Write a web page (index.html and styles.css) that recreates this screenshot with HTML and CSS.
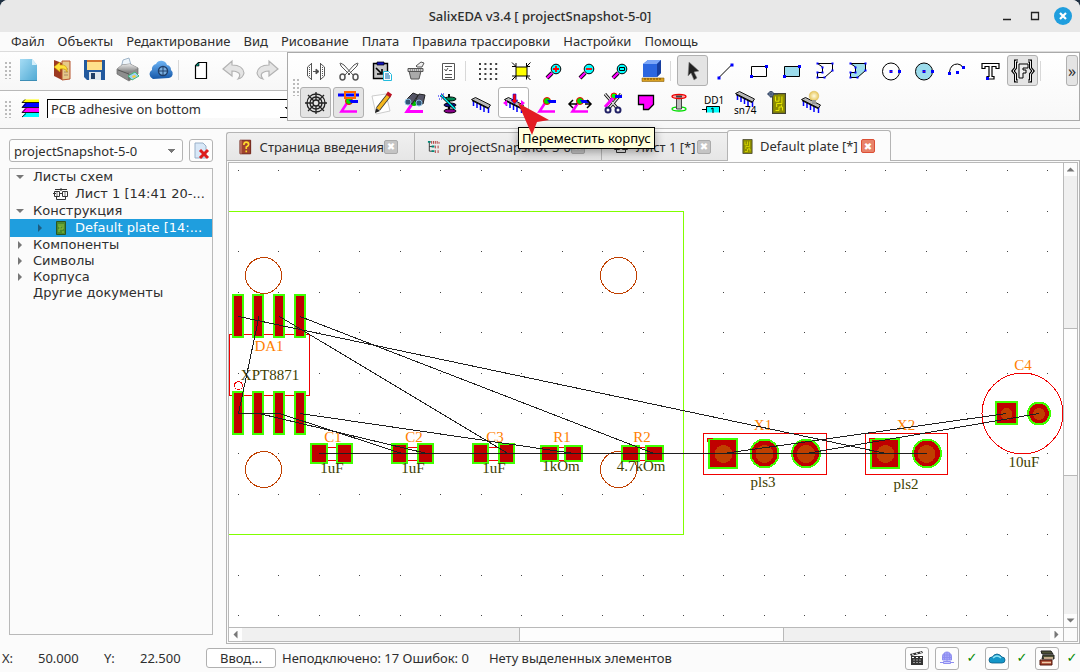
FILE: index.html
```html
<!DOCTYPE html>
<html lang="ru">
<head>
<meta charset="utf-8">
<title>SalixEDA v3.4 [ projectSnapshot-5-0]</title>
<link rel="stylesheet" href="styles.css">
</head>
<body>
<svg class="defs" width="0" height="0" aria-hidden="true">
  <defs>
    <linearGradient id="gBlue" x1="0" y1="0" x2="1" y2="1"><stop offset="0" stop-color="#a5dcf5"/><stop offset="1" stop-color="#4fa9d3"/></linearGradient>
    <linearGradient id="gCloud" x1="0" y1="0" x2="0" y2="1"><stop offset="0" stop-color="#6db4f5"/><stop offset="1" stop-color="#1557a8"/></linearGradient>
    <linearGradient id="gGrey" x1="0" y1="0" x2="0" y2="1"><stop offset="0" stop-color="#e8e8e8"/><stop offset="1" stop-color="#777"/></linearGradient>
    <radialGradient id="gBulb"><stop offset="0" stop-color="#fffbe0"/><stop offset="1" stop-color="#e8c860"/></radialGradient>
  </defs>
  <symbol id="lens" viewBox="0 0 24 24"><path d="M10 14l-5 5" stroke="#000" stroke-width="4"/><path d="M10 14l-5 5" stroke="#f0f" stroke-width="2.4"/><circle cx="14" cy="10" r="4.8" fill="#0ff" stroke="#000" stroke-width="1"/></symbol>
  <symbol id="chip" viewBox="0 0 24 24"><path d="M4.500 10v5M8 12v5M11.500 13v6M15 15v6M19.500 16v6" stroke="#00f" stroke-width="1.500"/><path d="M2.500 8.500l4-2 15 7.500-2 3z" fill="#b8b8b8" stroke="#000" stroke-width=".9"/><path d="M3 9.500l16 8" stroke="#000" stroke-width="1.200"/></symbol>
  <symbol id="track" viewBox="0 0 24 24"><path d="M10 12l-5.500 8.500H20" fill="none" stroke="#f0f" stroke-width="2.600"/><circle cx="12" cy="10" r="3.500" fill="#0d0" stroke="#f00"/><path d="M12 9h9v3h-7z" fill="#00f"/></symbol>
  <symbol id="board" viewBox="0 0 12 18"><path d="M.5.5h11v17H.5z" fill="#8d8d00" stroke="#443"/><path d="M3 3v4h3V3M8.500 3v6H4v3M3 15h3v-3h3v3M8 10v2" fill="none" stroke="#ee0" stroke-width=".8"/></symbol>
  <symbol id="sheet" viewBox="0 0 16 14"><path d="M1.500 4.500h5v5h-5zM9.500 4.500h5v5h-5zM0 6.500h3M6 6.500h4M3.500 9v3.500h9V9M8 1v3M2 2.500h12" fill="none" stroke="#333"/><path d="M4 5v4M12 5v4" stroke="#777"/></symbol>
</svg>

<div class="window">
  <header class="titlebar">
    <span class="title-space"></span>
    <h1 class="title">SalixEDA v3.4 [ projectSnapshot-5-0]</h1>
    <div class="win-controls">
      <button class="wc" aria-label="Свернуть"><svg width="10" height="12"><path d="M1 9.500h8" stroke="#222" stroke-width="1.500"/></svg></button>
      <button class="wc" aria-label="Развернуть"><svg width="10" height="10"><path d="M1.500 1.500h7v7h-7z" fill="none" stroke="#222" stroke-width="1.300"/></svg></button>
      <button class="wc wc-close" aria-label="Закрыть"><svg width="18" height="18"><circle cx="9" cy="9" r="9" fill="#1f9ede"/><path d="M6 6l6 6M12 6l-6 6" stroke="#fff" stroke-width="2.200"/></svg></button>
    </div>
  </header>

  <nav class="menubar">
    <button>Файл</button><button>Объекты</button><button>Редактирование</button><button>Вид</button><button>Рисование</button><button>Плата</button><button>Правила трассировки</button><button>Настройки</button><button>Помощь</button>
  </nav>

  <div class="docks">
    <div class="toolbar bar-file">
      <span class="grip"></span>
      <button class="tool" aria-label="Новый"><svg viewBox="0 0 24 24"><path d="M3 1h12l5 6v16H3z" fill="url(#gBlue)"/><path d="M15 1l5 6h-5z" fill="#d5effa"/><path d="M3 22.500h17" stroke="#3c8db5"/></svg></button>
      <button class="tool" aria-label="Открыть"><svg viewBox="0 0 24 24"><path d="M4 2l8 3v17l-8-4z" fill="#9c3a22"/><path d="M12 3h8v18l-8 1z" fill="#e6c98a" stroke="#b5542f"/><path d="M14 11h4M14 14h4M14 17h4" stroke="#a86"/><path d="M10 4L4 9l6 5v-3q6-1 7 3 1-8-7-7z" fill="#ffe13a" stroke="#c79a00" stroke-width=".6"/></svg></button>
      <button class="tool" aria-label="Сохранить"><svg viewBox="0 0 24 24"><path d="M1 2h21v20H4l-3-3z" fill="#235a9e"/><path d="M4 2h15v10H4z" fill="#ffe08a"/><path d="M4 2h15v2H4z" fill="#d4752f"/><path d="M6 14h12v8H6z" fill="#dfe8ee"/><path d="M8 15h4v6H8z" fill="#1e3e66"/></svg></button>
      <button class="tool" aria-label="Печать"><svg viewBox="0 0 24 24"><path d="M5 10l2-8 6-2 2 7z" fill="#eef5fb" stroke="#8aa3bb" stroke-width=".8"/><path d="M1 11l5-4 8-1 8 4v6l-9 7-12-7z" fill="#8d8d8d" stroke="#666" stroke-width=".7"/><path d="M1 11l5-4 8-1 8 4-9 5z" fill="url(#gGrey)"/><path d="M2 12l11 4v6" fill="none" stroke="#555"/><path d="M12 18l7-4 4 4-7 4z" fill="#9fd0f2" stroke="#4b7"/><path d="M16 18l3-1 1 2-3 1z" fill="#fc3"/></svg></button>
      <button class="tool" aria-label="Облако"><svg viewBox="0 0 24 24"><path d="M4 21a5 5 0 0 1-1-9 5 5 0 0 1 4-6 6 6 0 0 1 11 1 5 5 0 0 1 4 5 4.500 4.500 0 0 1-2 8z" fill="url(#gCloud)"/><circle cx="14" cy="13" r="4.500" fill="#7aaede" stroke="#20406c" stroke-width="1.500"/><path d="M14 9v8M10 13h8" stroke="#20406c" stroke-width="1"/></svg></button>
      <span class="sep"></span>
      <button class="tool" aria-label="Страница"><svg viewBox="0 0 24 24"><path d="M9.500 4.500h8v16h-11v-13z" fill="#fff" stroke="#000" stroke-width="1.200"/><path d="M6 8l4-4v4z" fill="#087" stroke="#000" stroke-width=".6"/></svg></button>
      <button class="tool" aria-label="Отменить"><svg viewBox="0 0 24 24"><path d="M1 11l9-8v4q11 0 12 8-1 5-6 6 4-5-1-7-2-1-5-1v5z" fill="#e4e4e4" stroke="#b2b2b2" stroke-width="1.200"/></svg></button>
      <button class="tool" aria-label="Вернуть"><svg viewBox="0 0 24 24"><path d="M23 11l-9-8v4Q3 7 2 15q1 5 6 6-4-5 1-7 2-1 5-1v5z" fill="#e4e4e4" stroke="#b2b2b2" stroke-width="1.200"/></svg></button>
    </div>
    <div class="toolbar bar-layer">
      <span class="grip"></span>
      <button class="tool tool-layer" aria-label="Слои"><svg viewBox="0 0 24 24"><path d="M7 2.500h14v3H4z" fill="#ff0"/><path d="M7 6h14v4H4z" fill="#00f"/><path d="M7 11h14v4H4z" fill="#f0f"/><path d="M7 16h14v4H4z" fill="#0ff"/><path d="M7 2.500L4 5.500h17M8 6.500l-4 4h17M8 11.500l-4 4h17M8 16.500L4 20" fill="none" stroke="#000" stroke-width=".9"/></svg></button>
      <select class="layer-select" aria-label="Слой"><option>PCB adhesive on bottom</option></select>
    </div>

    <div class="float-bar">
      <span class="grip grip-tall"></span>
      <div class="tool-rows">
        <div class="tool-row">
          <button class="tool" aria-label="Отразить"><svg viewBox="0 0 24 24" fill="none" stroke="#555"><path d="M7.500 4v17M16.500 4v17"/><path d="M7 5L3.500 8v9L7 20M17 5l3.500 3v9L17 20"/><path d="M5.500 8v9M18.500 8v9" stroke-dasharray="1 1"/><path d="M9 12.500h4M12 10l3 2.500-3 2.500z" fill="#444"/></svg></button>
          <button class="tool" aria-label="Вырезать"><svg viewBox="0 0 24 24" fill="none" stroke="#555"><path d="M3.500 4L7 6l9 10M20.500 4L17 6 8 16M3 4l1 3 9 9M21 4l-1 3-9 9"/><ellipse cx="5.500" cy="18" rx="2.500" ry="3" stroke-width="1.500"/><ellipse cx="18.500" cy="18" rx="2.500" ry="3" stroke-width="1.500"/></svg></button>
          <button class="tool" aria-label="Вставить"><svg viewBox="0 0 24 24"><path d="M3.500 4.500h14v15h-14z" fill="#c6c6c6" stroke="#000" stroke-width="1.400"/><path d="M7 3h7v3H7z" fill="#11b" stroke="#000" stroke-width=".7"/><path d="M6 9l6 6M12 10v5H7" stroke="#000" stroke-width="1.600" fill="none"/><path d="M13.500 12.500h5l3 3v6h-8z" fill="#fff" stroke="#2bd"/><path d="M15 15h4M15 17h5M15 19h5" stroke="#06a"/></svg></button>
          <button class="tool" aria-label="Удалить"><svg viewBox="0 0 24 24" fill="#aaa" stroke="#555"><path d="M6 12h12l-2 8H8z"/><path d="M5 9.500h15v3H5z" fill="#ccc"/><path d="M7 11h11" stroke-dasharray="1 1"/><path d="M13 7l5-4 3 1-2 4h-5z" fill="#eee"/></svg></button>
          <button class="tool" aria-label="Свойства"><svg viewBox="0 0 24 24" fill="none" stroke="#555"><path d="M6.500 4.500h12v16h-12z" fill="#fff"/><path d="M9 7.500h7M9 15.500h7M9 18.500h7M8.500 10l1.500 2 2-3M13 11.500h3"/></svg></button>
          <span class="sep"></span>
          <button class="tool" aria-label="Сетка"><svg viewBox="0 0 24 24"><path d="M3 5h19M3 10h19M3 15h19M3 20h19" stroke="#000" stroke-width="1.600" stroke-dasharray="2 3.400"/></svg></button>
          <button class="tool" aria-label="Вписать"><svg viewBox="0 0 24 24"><path d="M7 8h11v9H7z" fill="#ff0" stroke="#000"/><path d="M3 3.500l4 4M7 4v3.500H3M21.500 3.500l-4 4M17.500 4v3.500H21M3 21l4-4M7 20.500V17H3M21.500 21l-4-4M17.500 20.500V17H21" stroke="#000" fill="none"/></svg></button>
          <button class="tool" aria-label="Увеличить"><svg viewBox="0 0 24 24"><use href="#lens"/><path d="M11 10h6M14 7v6" stroke="#f00" stroke-width="1.800"/></svg></button>
          <button class="tool" aria-label="Уменьшить"><svg viewBox="0 0 24 24"><use href="#lens"/><path d="M11 10h6" stroke="#f00" stroke-width="1.800"/></svg></button>
          <button class="tool" aria-label="Увеличить область"><svg viewBox="0 0 24 24"><use href="#lens"/><path d="M11.500 8.500h5v3h-5z" stroke="#000" fill="none"/></svg></button>
          <button class="tool" aria-label="Трёхмерный вид"><svg viewBox="0 0 24 24"><path d="M2 5l5-4h13v13l-4 4H2z" fill="#2b66e0"/><path d="M2 5l5-4h13l-4 4z" fill="#7ba6f8"/><path d="M16 5l4-4v13l-4 4z" fill="#173e9e"/><path d="M1 19h22v3.500H1z" fill="#d9a021" stroke="#8a6008" stroke-width=".6"/><path d="M4 19v2M7 19v2M10 19v2M13 19v2M16 19v2M19 19v2" stroke="#744b00"/></svg></button>
          <span class="sep"></span>
          <button class="tool on" aria-label="Выбор"><svg viewBox="0 0 24 24"><path d="M8 3l10 9-5 1 3 6-3 2-3-7-3 3z" fill="#222" stroke="#888" stroke-width=".6"/></svg></button>
          <button class="tool" aria-label="Линия"><svg viewBox="0 0 24 24"><path d="M5 18.500l13-13" stroke="#000"/><path d="M3.500 17.500h3v3h-3zM16.500 4.500h3v3h-3z" fill="#00f"/></svg></button>
          <button class="tool" aria-label="Прямоугольник"><svg viewBox="0 0 24 24"><path d="M4.500 7.500h15v10h-15z" fill="none" stroke="#000"/><path d="M3 16h3v3H3zM18 6h3v3h-3z" fill="#00f"/></svg></button>
          <button class="tool" aria-label="Заполненный прямоугольник"><svg viewBox="0 0 24 24"><path d="M4.500 7.500h15v10h-15z" fill="#9cdcec" stroke="#000"/><path d="M3 16h3v3H3zM18 6h3v3h-3z" fill="#00f"/></svg></button>
          <button class="tool" aria-label="Полилиния"><svg viewBox="0 0 24 24"><path d="M4.500 4.500h15v7l-8 7h-7v-5h5V8z" fill="none" stroke="#000"/><path d="M3.500 4.500h2M18.500 4.500h2M18.500 11.500h2M10.500 18.500h2M3.500 18.500h2M3.500 13.500h2M8.500 13.500h2M8.500 8.500h2" stroke="#00f" stroke-width="2"/></svg></button>
          <button class="tool" aria-label="Полигон"><svg viewBox="0 0 24 24"><path d="M4.500 4.500h15v7l-8 7h-7v-5h5V8z" fill="#9cdcec" stroke="#000"/><path d="M3.500 4.500h2M18.500 4.500h2M18.500 11.500h2M10.500 18.500h2M3.500 18.500h2M3.500 13.500h2M8.500 13.500h2M8.500 8.500h2" stroke="#00f" stroke-width="2"/></svg></button>
          <button class="tool" aria-label="Окружность"><svg viewBox="0 0 24 24"><circle cx="12" cy="12.500" r="8.500" fill="none" stroke="#000"/><path d="M10.500 11h3v3h-3zM19 11h3v3h-3z" fill="#00f"/><path d="M11.500 12h1v1h-1z" fill="#f00"/></svg></button>
          <button class="tool" aria-label="Круг"><svg viewBox="0 0 24 24"><circle cx="12" cy="12.500" r="8.500" fill="#9cdcec" stroke="#000"/><path d="M10.500 11h3v3h-3zM19 11h3v3h-3z" fill="#00f"/><path d="M11.500 12h1v1h-1z" fill="#f00"/></svg></button>
          <button class="tool" aria-label="Дуга"><svg viewBox="0 0 24 24"><path d="M4.500 13q1-8 8-8 4 0 5.500 4" fill="none" stroke="#000"/><path d="M3 13h3v3H3zM17 7h3v3h-3zM11 12h3v3h-3z" fill="#00f"/></svg></button>
          <button class="tool" aria-label="Текст"><svg viewBox="0 0 24 24"><path d="M4 4.500h17v5h-3v-2h-4v10h2v2.500H9v-2.500h2v-10H7v2H4z" fill="#fff" stroke="#000" stroke-width="1.200"/><path d="M8 18h3v3H8z" fill="#00f"/></svg></button>
          <button class="tool on" aria-label="Параметр"><svg viewBox="0 0 24 24"><path d="M7 2H4.500v7L2 12l2.500 3v7H7M17 2h2.500v7l2.500 3-2.500 3v7H17" fill="none" stroke="#000" stroke-width="3"/><path d="M7 2H4.500v7L2 12l2.500 3v7H7M17 2h2.500v7l2.500 3-2.500 3v7H17" fill="none" stroke="#eee"/><path d="M8 5h9v4h-5v2h3v3h-3v5H8z" fill="#eee" stroke="#000"/></svg></button>
          <span class="sep"></span>
          <button class="more" aria-label="Ещё">»</button>
        </div>
        <div class="tool-row">
          <button class="tool on" aria-label="Сетка связей"><svg viewBox="0 0 24 24" fill="none" stroke="#222" stroke-width="1.300"><circle cx="12" cy="12" r="3"/><circle cx="12" cy="12" r="6"/><circle cx="12" cy="12" r="9"/><path d="M1 12h8M15 12h8M12 1v8M12 15v8M4 4l6 6M20 4l-6 6M4 20l6-6M20 20l-6-6"/></svg></button>
          <button class="tool on" aria-label="Трассировать"><svg viewBox="0 0 24 24"><path d="M1 2.500h21v3H1z" fill="#00f"/><use href="#track"/><path d="M8 1h10v6H8z" fill="none" stroke="#f60" stroke-width="2"/></svg></button>
          <button class="tool" aria-label="Правка"><svg viewBox="0 0 24 24"><path d="M2 5l14-2 4 17-14 3z" fill="#fff" stroke="#ccc"/><path d="M8 18L19 4" stroke="#333" stroke-width="5"/><path d="M8 18L19 4" stroke="#f4b71e" stroke-width="3.400"/><path d="M18 5l2-3" stroke="#b12" stroke-width="5"/><path d="M5 22l1-5 4 3z" fill="#222"/></svg></button>
          <button class="tool" aria-label="Найти"><svg viewBox="0 0 24 24"><path d="M9 13l-5 7.500h16" fill="none" stroke="#f0f" stroke-width="3"/><circle cx="11" cy="12" r="3" fill="#0b0"/><path d="M2 10l8-8 5 2-6 9zM12 10l4-7 6 1-2 9z" fill="#556" stroke="#222"/><ellipse cx="5" cy="11" rx="3" ry="3" fill="#357" stroke="#8bd"/><ellipse cx="16" cy="12" rx="3" ry="3" fill="#357" stroke="#8bd"/></svg></button>
          <button class="tool" aria-label="Слои платы"><svg viewBox="0 0 24 24"><path d="M13 3v18" stroke="#000" stroke-width="2"/><ellipse cx="14" cy="8" rx="6" ry="2" fill="#085" stroke="#000"/><ellipse cx="14" cy="14" rx="6" ry="2" fill="#118" stroke="#000"/><ellipse cx="14" cy="20" rx="6" ry="2" fill="#808" stroke="#000"/><path d="M5 4l14 14" stroke="#000" stroke-width="2.600"/><path d="M5 4l14 14" stroke="#0ff" stroke-width="1.400"/><path d="M2 5h4M5 3h4M3 8h3M7 6h2" stroke="#00f" stroke-dasharray="1 1"/></svg></button>
          <button class="tool" aria-label="Корпус"><svg viewBox="0 0 24 24"><use href="#chip"/></svg></button>
          <button class="tool hover" aria-label="Переместить корпус"><svg viewBox="0 0 24 24"><use href="#chip"/><path d="M11 3h3v6h2l-3.500 4L9 9h2z" fill="#f00" stroke="#00f" stroke-width=".6"/><path d="M1 12l4-3v6zM23 12l-4-3v6z" fill="#f0f"/></svg></button>
          <button class="tool" aria-label="Дорожка"><svg viewBox="0 0 24 24"><use href="#track"/></svg></button>
          <button class="tool" aria-label="Сдвинуть дорожку"><svg viewBox="0 0 24 24"><use href="#track"/><path d="M1 13h8M17 13h6M5 9l-4 4 4 4M19 9l4 4-4 4" fill="none" stroke="#000" stroke-width="1.500"/></svg></button>
          <button class="tool" aria-label="Удалить дорожку"><svg viewBox="0 0 24 24"><path d="M4 3l12 14M20 3L8 17" stroke="#000" stroke-width="3"/><path d="M4 3l12 14M20 3L8 17" stroke="#ddd" stroke-width="1.400"/><circle cx="13" cy="5" r="3" fill="#0f0" stroke="#f00"/><path d="M14 4h7v3h-7z" fill="#00f"/><path d="M4 16l8-9" stroke="#f0f" stroke-width="3"/><circle cx="7" cy="19" r="2.500" fill="none" stroke="#226" stroke-width="2"/><circle cx="17" cy="19" r="2.500" fill="none" stroke="#226" stroke-width="2"/></svg></button>
          <button class="tool" aria-label="Полигон меди"><svg viewBox="0 0 24 24"><path d="M4.500 4.500h15v9l-5 5h-5v-5h-5z" fill="#f0f" stroke="#000" stroke-width="1.300"/></svg></button>
          <button class="tool" aria-label="Переходное отверстие"><svg viewBox="0 0 24 24"><ellipse cx="12" cy="18" rx="7" ry="2" fill="none" stroke="#0d0" stroke-width="1.300"/><path d="M9.500 7h5v11h-5z" fill="#bbb" stroke="#444"/><ellipse cx="12" cy="5.500" rx="7" ry="2" fill="#faa" stroke="#e00" stroke-width="1.300"/><path d="M9 5.500h6" stroke="#444" stroke-width="2"/></svg></button>
          <button class="tool" aria-label="Перенумеровать"><svg viewBox="0 0 24 24"><text class="ico-text" x="4" y="13">DD1</text><path d="M6.500 15.500h13v6h-13z" fill="#0ff"/><path d="M19.500 21.500v-6h-13v6M2 18.500h4M11 18l2-1v5" fill="none" stroke="#000"/></svg></button>
          <button class="tool" aria-label="Тип корпуса"><svg viewBox="0 0 24 24"><use href="#chip" y="-6"/><text class="ico-text ico-small" x="1" y="23">sn74</text></svg></button>
          <button class="tool" aria-label="Параметры платы"><svg viewBox="0 0 24 24"><use href="#board" x="4" y="2" width="18" height="21"/><circle cx="5" cy="3" r="2.500" fill="#9ab" stroke="#346"/><path d="M1 3h11M5 0v7" stroke="#346"/></svg></button>
          <button class="tool" aria-label="Подсказка корпуса"><svg viewBox="0 0 24 24"><use href="#chip"/><circle cx="15" cy="5" r="4.800" fill="url(#gBulb)" stroke="#d8b850" stroke-width=".5"/><path d="M13 9h4v4h-4z" fill="#999"/></svg></button>
        </div>
      </div>
    </div>
  </div>

  <main class="work">
    <aside class="sidebar">
      <div class="project-row">
        <select class="project-select" aria-label="Проект"><option>projectSnapshot-5-0</option></select>
        <button class="close-project" aria-label="Закрыть проект"><svg width="18" height="18" viewBox="0 0 18 18"><path d="M3 1h8l3 3v12H3z" fill="#d8e8f8" stroke="#9ab0c8"/><path d="M8 8l8 8M16 8l-8 8" stroke="#dd1c1c" stroke-width="3"/></svg></button>
      </div>
      <ul class="tree">
        <li class="row"><i class="arrow down"></i>Листы схем</li>
        <li class="row child"><svg width="16" height="14"><use href="#sheet"/></svg><span>Лист 1 [14:41 20-...</span></li>
        <li class="row"><i class="arrow down"></i>Конструкция</li>
        <li class="row child selected"><i class="arrow right"></i><svg width="16" height="14" viewBox="0 0 16 14"><path d="M3.500.500h9v13h-9z" fill="#4a8a2e" stroke="#2b5520"/><path d="M6 3v3h2V3M10 3v5H6v3M9 11h2" fill="none" stroke="#8fc23c"/></svg><span>Default plate [14:...</span></li>
        <li class="row"><i class="arrow right"></i>Компоненты</li>
        <li class="row"><i class="arrow right"></i>Символы</li>
        <li class="row"><i class="arrow right"></i>Корпуса</li>
        <li class="row"><i class="arrow"></i>Другие документы</li>
      </ul>
    </aside>

    <section class="editor">
      <div class="tabs">
        <div class="tab tab-a"><svg width="16" height="16" viewBox="0 0 14 16"><path d="M1 1h11v14H1z" fill="#a1432f" stroke="#6e2015"/><path d="M2 1v14" stroke="#d98"/><path d="M5 6q0-3 2.500-3T10 5.500Q10 7 7.500 8v2M7.500 11.500v2" fill="none" stroke="#ffdc2e" stroke-width="1.700"/></svg><span>Страница введения</span><button class="tab-x" aria-label="Закрыть вкладку">✖</button></div>
        <div class="tab tab-b"><svg width="16" height="16" viewBox="0 0 15 15"><path d="M2.500 2v10M2.500 7H6M2.500 12H6" stroke="#333" fill="none"/><path d="M1 2h3M5 7h3M5 12h3" stroke="#087" stroke-width="2"/><path d="M5 1v3M7 1v3M9 1v3M11 1v3M13 2v2M9 6v3M12 6v3M9 11v3M12 11v3" stroke="#a33"/></svg><span>projectSnapshot-5-0</span><button class="tab-x" aria-label="Закрыть вкладку">✖</button></div>
        <div class="tab tab-c"><svg width="16" height="14"><use href="#sheet"/></svg><span>Лист 1 [*]</span><button class="tab-x" aria-label="Закрыть вкладку">✖</button></div>
        <div class="tab active"><svg width="11" height="15"><use href="#board"/></svg><span>Default plate [*]</span><button class="tab-x red" aria-label="Закрыть вкладку">✖</button></div>
      </div>
      <div class="pane">
        <div class="view">
          <svg class="pcb" role="img" aria-label="Печатная плата">
            <g transform="translate(-229 -163)">
              <path class="dots" d="M238 170.500h900M238 211.500h900M238 251.500h900M238 292.500h900M238 332.500h900M238 373.500h900M238 413.500h900M238 453.500h900M238 494.500h900M238 534.500h900M238 575.500h900M238 615.500h900"/>
              <path class="edge" d="M220 211.500H683.500V534.500H220"/>
              <g class="hole"><circle cx="263.500" cy="275.500" r="18"/><circle cx="618.500" cy="275.500" r="18"/><circle cx="263.500" cy="469.500" r="18"/><circle cx="618.500" cy="469.500" r="18"/></g>
              <g class="outline">
                <path d="M229.500 334.500h80v61h-80zM703.500 433.500h123v41h-123zM865.500 433.500h82v41h-82z"/>
                <path d="M324 447.500h16M324 460.500h16M405 447.500h16M405 460.500h16M486 447.500h16M486 460.500h16M556 447.500h11M556 460.500h11M637 447.500h11M637 460.500h11"/>
                <circle cx="238.500" cy="385.500" r="4"/><circle cx="1022.500" cy="413.500" r="40.500"/>
              </g>
              <g class="pad">
                <rect x="233" y="295" width="10" height="42"/><rect x="253" y="295" width="10" height="42"/><rect x="274" y="295" width="10" height="42"/><rect x="295" y="295" width="10" height="42"/>
                <rect x="233" y="392" width="10" height="42"/><rect x="253" y="392" width="10" height="42"/><rect x="274" y="392" width="10" height="42"/><rect x="295" y="392" width="10" height="42"/>
                <rect x="311" y="444" width="16" height="19"/><rect x="337" y="444" width="15" height="19"/>
                <rect x="392" y="444" width="15" height="19"/><rect x="418" y="444" width="15" height="19"/>
                <rect x="473" y="444" width="15" height="19"/><rect x="499" y="444" width="15" height="19"/>
                <rect x="541" y="446" width="17" height="15"/><rect x="565" y="446" width="17" height="15"/>
                <rect x="622" y="446" width="17" height="15"/><rect x="646" y="446" width="17" height="15"/>
                <rect x="709" y="439" width="28" height="29"/><circle cx="764.500" cy="453.500" r="14"/><circle cx="806" cy="453.500" r="14"/>
                <rect x="871" y="439" width="28" height="29"/><circle cx="927" cy="453.500" r="14"/>
                <rect x="996" y="402" width="21" height="22"/><circle cx="1039" cy="413.500" r="11"/>
              </g>
              <g class="drill"><circle cx="723.500" cy="454" r="9"/><circle cx="764.500" cy="454" r="9"/><circle cx="806" cy="454" r="9"/><circle cx="885.500" cy="454" r="9"/><circle cx="926.500" cy="454" r="9"/><circle cx="1006.500" cy="414" r="6"/><circle cx="1039" cy="414" r="6"/></g>
              <path class="mark" d="M707.500 442v-4h5M869.500 442v-4h5"/>
              <g class="name"><text x="269" y="351">DA1</text><text x="333" y="442">C1</text><text x="414" y="442">C2</text><text x="495" y="442">C3</text><text x="562" y="442">R1</text><text x="642" y="442">R2</text><text x="763" y="430">X1</text><text x="906" y="430">X2</text><text x="1023" y="370">C4</text></g>
              <g class="value"><text x="270" y="380">XPT8871</text><text x="332" y="473">1uF</text><text x="413" y="473">1uF</text><text x="494" y="473">1uF</text><text x="561" y="471">1kOm</text><text x="641" y="471">4.7kOm</text><text x="763" y="487">pls3</text><text x="906" y="489">pls2</text><text x="1024" y="467">10uF</text></g>
              <path class="wire" d="M238.500 316.500L886 453.500M300 316.500L654 453.500M279.500 316.500L508 453.500M259 316.500L238.500 413.500H279.500M259 413.500L427 453.500M279.500 413.500L402 453.500M300 413.500L574 453.500M319 453.500H927M723.500 453.500L1006.500 413.500M806 453.500L1039 413.500"/>
            </g>
          </svg>
        </div>
        <div class="vbar"><button class="sb up" aria-label="Вверх"></button><span class="groove v-before"></span><span class="thumb v-thumb"></span><span class="groove v-after"></span><button class="sb dn" aria-label="Вниз"></button></div>
        <div class="hbar"><button class="sb lf" aria-label="Влево"></button><span class="groove h-before"></span><span class="thumb h-thumb"></span><span class="groove h-after"></span><button class="sb rt" aria-label="Вправо"></button></div>
        <span class="corner"></span>
      </div>
    </section>
  </main>

  <footer class="status">
    <span class="axis">X:</span><span class="coord">50.000</span><span class="axis">Y:</span><span class="coord">22.500</span>
    <button class="enter">Ввод...</button>
    <span class="errors">Неподключено: 17 Ошибок: 0</span>
    <span class="selection">Нету выделенных элементов</span>
    <div class="status-right">
      <button class="sbtn" aria-label="Видео"><svg width="16" height="16"><path d="M2 6h12v9H2z" fill="#333"/><path d="M1 4l12-3 1 2L2 6z" fill="#333"/><path d="M3 4l2 1M7 3l2 1M11 2l2 1M3 7.500h10" stroke="#fff" stroke-dasharray="2 2"/><path d="M4 10h8M4 12.500h8" stroke="#999" stroke-dasharray="2 1"/></svg></button>
      <button class="sbtn" aria-label="Сеть"><svg width="16" height="16" fill="none" stroke="#8d8df0"><path d="M3.500 10V7a4.500 5 0 0 1 9 0v3z" fill="#a5a5fa"/><path d="M8 2v8M5.500 3v7M10.500 3v7M3.500 5h9M3.500 7.500h9M8 10v3M1 12.500h4M11 12.500h4"/><path d="M4.500 11.500h7v2h-7z" fill="#ccccff"/></svg></button>
      <span class="ok">✓</span>
      <button class="sbtn" aria-label="Облако"><svg width="18" height="16"><path d="M4 13q-3 0-3-3t3-3q1 0 2-2 3-2 6 0l2 2q3 0 3 3t-3 3z" fill="#1496c8" stroke="#0b5d86" stroke-width=".8"/><path d="M5 8q4-4 8 0" stroke="#8ce3f5" stroke-width="1.500" fill="none"/></svg></button>
      <span class="ok">✓</span>
      <button class="sbtn" aria-label="Библиотека"><svg width="16" height="16"><path d="M2 1h10l2 3H3zM4 5h11v4H3z" fill="#4d5236" stroke="#222"/><path d="M5 8h9" stroke="#eca" stroke-width="1.500"/><path d="M1 10h12v5H1z" fill="#a6422d" stroke="#51180e"/><path d="M3 12.500h9" stroke="#eca" stroke-width="1.500"/></svg></button>
      <span class="ok">✓</span>
    </div>
  </footer>

  <div class="tooltip" role="tooltip">Переместить корпус</div>
  <svg class="pointer" width="34" height="34" aria-hidden="true"><path d="M1 0l31 17-12 2-5 13z" fill="#e31b23"/></svg>
</div>
</body>
</html>
```
FILE: styles.css
```css
* { box-sizing: border-box; }

body {
  margin: 0;
  background: #1f3042;
  font: 13px/18px "Noto Sans", sans-serif;
  color: #2e2e2e;
}

button, select {
  font: inherit;
  color: inherit;
  margin: 0;
  padding: 0;
  border: 0;
  background: none;
}

.defs { position: absolute; }

.window {
  position: relative;
  display: flex;
  flex-direction: column;
  height: 100vh;
  background: #fbfbfb;
  border-radius: 8px 8px 0 0;
  overflow: hidden;
}

/* Title bar and menu */
.titlebar {
  display: grid;
  grid-template-columns: 1fr auto 1fr;
  align-items: center;
  height: 32px;
  background: #e8e8e8;
}
.title { margin: 0; font-size: 13px; font-weight: 500; }
.win-controls { display: flex; justify-content: flex-end; align-items: center; gap: 10px; padding-right: 8px; }
.wc { display: flex; justify-content: center; width: 18px; }

.menubar {
  display: flex;
  align-items: flex-start;
  gap: 13px;
  height: 20px;
  padding-left: 11px;
  border-bottom: 1px solid #dcdcdc;
}

/* Toolbars */
.docks { position: relative; flex: none; }
.toolbar {
  display: flex;
  align-items: center;
  gap: 2px;
  height: 39px;
  padding: 0 0 2px 4px;
  border-bottom: 1px solid #b9b9b9;
  background: linear-gradient(#fefefe, #f7f7f7);
}
.bar-layer { height: 38px; }
.grip {
  width: 7px;
  height: 18px;
  background: radial-gradient(circle, #bbb 1px, transparent 1px) 0 0 / 4px 4px;
}
.tool {
  display: flex;
  align-items: center;
  justify-content: center;
  width: 31px;
  height: 31px;
  border: 1px solid transparent;
  border-radius: 3px;
}
.tool svg { width: 24px; height: 24px; flex: none; overflow: visible; }
.tool.on { background: #e4e4e4; border-color: #b0b0b0; }
.tool.hover { background: #fff; border-color: #b4b4b4; }
.sep { width: 5px; height: 20px; border-left: 1px solid #d8d8d8; }
.ico-text { font: 10px "Noto Sans", sans-serif; }

.tool-layer { width: 30px; margin-left: 2px; }
.layer-select {
  appearance: none;
  width: 243px;
  height: 19px;
  padding-left: 3px;
  border: solid #000;
  border-width: 1px 0 0 1px;
  border-radius: 0;
  background: linear-gradient(#000, #000) right 0 bottom 0 / 10px 1px no-repeat, linear-gradient(to bottom left, #222 50%, transparent 50%) right 2px center / 4px 4px no-repeat, #fff;
}

.float-bar {
  position: absolute;
  z-index: 2;
  left: 287px;
  right: 0;
  top: 0;
  display: flex;
  align-items: center;
  padding: 2px 0 2px 4px;
  border: 1px solid #aaa;
  background: linear-gradient(#fff, #f8f8f8);
}
.grip-tall { margin-right: 1px; }
.tool-rows { flex: 1; display: flex; flex-direction: column; gap: 1px; }
.tool-row { display: flex; align-items: center; gap: 2px; }
.more {
  width: 12px;
  height: 31px;
  margin: 0 1px 0 auto;
  border: 1px solid #b0b0b0;
  border-radius: 3px;
  background: #e4e4e4;
  font-size: 16px;
  text-align: center;
}

/* Sidebar */
.work { flex: 1; display: flex; gap: 13px; min-height: 0; padding-left: 9px; }
.sidebar { display: flex; flex-direction: column; gap: 6px; width: 204px; padding: 10px 0 9px; }
.project-row { display: flex; gap: 6px; height: 23px; }
.project-select {
  appearance: none;
  flex: 1;
  padding-left: 4px;
  border: 1px solid #b4b4b4;
  border-radius: 3px;
  background: linear-gradient(to bottom left, #777 50%, transparent 50%) right 10px center / 4px 4px no-repeat, linear-gradient(to bottom right, #777 50%, transparent 50%) right 6px center / 4px 4px no-repeat, #fdfdfd;
}
.close-project {
  display: flex;
  align-items: center;
  justify-content: center;
  width: 24px;
  border: 1px solid #b4b4b4;
  border-radius: 3px;
  background: #fdfdfd;
}
.tree {
  flex: 1;
  margin: 0;
  padding: 0;
  list-style: none;
  border: 1px solid #b9b9b9;
  font: 13px/16px "DejaVu Sans", sans-serif;
  white-space: nowrap;
  overflow: hidden;
}
.row { display: flex; align-items: center; height: 16px; }
.row.child { height: 18px; padding-left: 20px; }
.row.child svg { margin-left: 23px; }
.row.child .arrow + svg { margin-left: 0; }
.row.child span { margin-left: 6px; }
.row.selected { background: #1f9ede; color: #fff; }
.arrow { width: 23px; height: 8px; }
.arrow::before { content: ""; display: block; margin-left: 6px; }
.down::before { width: 8px; height: 4px; margin-top: 2px; background: #777; clip-path: polygon(0 0, 100% 0, 50% 100%); }
.right::before { width: 4px; height: 8px; margin-left: 8px; background: #777; clip-path: polygon(0 0, 100% 50%, 0 100%); }
.selected .right::before { background: #1d5c80; }

/* Editor */
.editor { flex: 1; display: flex; flex-direction: column; min-width: 0; padding-top: 1px; }
.tabs { position: relative; z-index: 1; display: flex; align-items: flex-end; height: 31px; margin-bottom: -1px; }
.tab {
  display: flex;
  align-items: center;
  height: 29px;
  padding: 0 16px 0 12px;
  border: 1px solid #b4b4b4;
  border-right-width: 0;
  background: linear-gradient(#f0f0f0, #e6e6e6);
  white-space: nowrap;
}
.tab span { margin-left: 7px; }
.tab-a { width: 188px; border-top-left-radius: 3px; }
.tab-b { width: 187px; }
.tab-c { width: 126px; padding-left: 11px; }
.tab.active {
  height: 31px;
  width: 164px;
  padding: 0 15px 0 14px;
  border-width: 1px 1px 0;
  border-radius: 3px 3px 0 0;
  background: #fcfcfc;
}
.tab-x {
  width: 14px;
  height: 14px;
  flex: none;
  margin-left: auto;
  border: 1px solid #aaa;
  border-radius: 2px;
  background: #c4c4c4;
  color: #fff;
  font: 10px/11px "DejaVu Sans", sans-serif;
}
.tab-x.red { background: #e8836a; border-color: #dc4f35; }

.pane {
  flex: 1;
  display: grid;
  grid-template: 1fr 15px / 1fr 15px;
  min-height: 0;
  padding: 1px;
  border: 1px solid #b4b4b4;
}
.view { min-width: 0; min-height: 0; border: solid #b9b9b9; border-width: 1px 0 0 1px; background: #fff; }
.pcb { display: block; width: 100%; height: 100%; overflow: hidden; shape-rendering: crispEdges; }
.dots { fill: none; stroke: #444; stroke-dasharray: 1 39.45; }
.edge { fill: none; stroke: #80ff00; }
.hole { fill: none; stroke: #c04000; }
.outline, .mark { fill: none; stroke: #f00000; }
.pad { fill: #c00000; stroke: #40ff00; stroke-width: 2px; }
.drill { fill: #c04000; }
.name, .value { font: 15px "Liberation Serif", serif; text-anchor: middle; fill: #ff8000; }
.value { fill: #404000; }
.wire { fill: none; stroke: #202020; }

.vbar, .hbar { display: flex; border: 1px solid #b9b9b9; background: #fdfdfd; }
.vbar { flex-direction: column; border-bottom: 0; }
.hbar { border-right: 0; }
.corner { border: 1px solid #b9b9b9; }
.groove { background: #f0f0f0; }
.v-before { flex: 152; }
.v-thumb { flex: 146; border: solid #b9b9b9; border-width: 1px 0; }
.v-after { flex: 138; }
.h-before { flex: 277; }
.h-thumb { flex: 264; border: solid #b9b9b9; border-width: 0 1px; }
.h-after { flex: 266; }
.sb { flex: none; width: 13px; height: 13px; display: flex; align-items: center; justify-content: center; }
.sb::before { content: ""; width: 8px; height: 8px; background: #777; }
.up::before { clip-path: polygon(0 75%, 50% 25%, 100% 75%); }
.dn::before { clip-path: polygon(0 25%, 100% 25%, 50% 75%); }
.lf::before { clip-path: polygon(75% 0, 75% 100%, 25% 50%); }
.rt::before { clip-path: polygon(25% 0, 75% 50%, 25% 100%); }

/* Status bar */
.status { display: flex; align-items: center; height: 28px; padding-left: 2px; white-space: nowrap; }
.axis { width: 36px; }
.coord { width: 66px; }
.enter { width: 70px; height: 20px; line-height: 18px; border: 1px solid #b0b0b0; border-radius: 3px; background: #fff; }
.errors { margin-left: 6px; }
.selection { margin-left: 20px; }
.status-right { display: flex; align-items: center; gap: 6px; margin-left: auto; padding-right: 1px; }
.sbtn { display: flex; align-items: center; justify-content: center; width: 24px; height: 23px; border: 1px solid #b0b0b0; border-radius: 3px; background: #fdfdfd; }
.ok { width: 14px; color: #080; font: 13px/18px "DejaVu Sans", sans-serif; text-align: center; }

/* Overlays */
.tooltip {
  position: absolute;
  z-index: 3;
  left: 518px;
  top: 127px;
  padding: 1px 3px;
  border: 1px solid #000;
  background: #ffffdc;
  color: #000;
  box-shadow: 0 3px 10px rgba(0, 0, 0, .35);
}
.pointer { position: absolute; z-index: 4; left: 517px; top: 103px; }
```
